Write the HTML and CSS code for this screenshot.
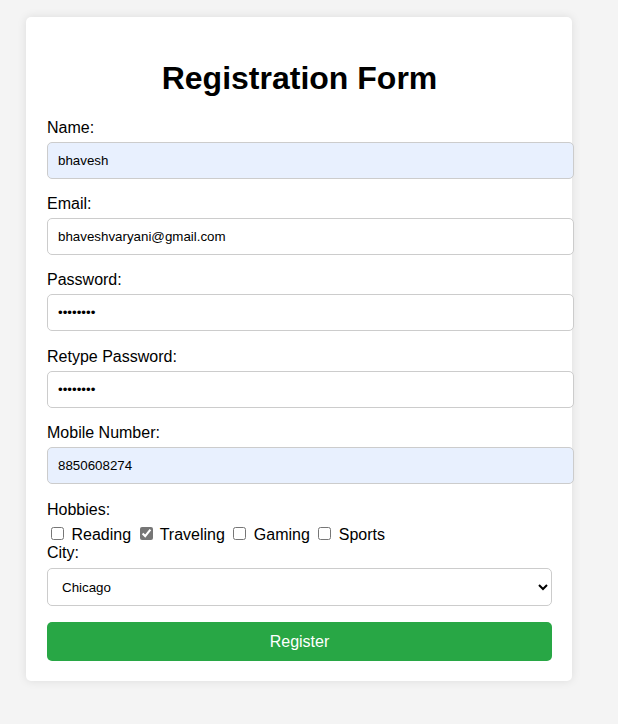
FILE: index.html
```html
<!DOCTYPE html>
<html>
<head>
<meta charset="utf-8">
<link rel="stylesheet" href="styles.css">
</head>
<body>
<div class="container">
  <h1 class="title">Registration Form</h1>
  <form class="form">
    <label class="field-label" for="name">Name:</label>
    <input class="field autofill" id="name" type="text" value="bhavesh">
    <label class="field-label" for="email">Email:</label>
    <input class="field" id="email" type="email" value="bhaveshvaryani@gmail.com">
    <label class="field-label" for="pw">Password:</label>
    <input class="field" id="pw" type="password" value="password">
    <label class="field-label retype" for="pw2">Retype Password:</label>
    <input class="field" id="pw2" type="password" value="password">
    <label class="field-label" for="mobile">Mobile Number:</label>
    <input class="field autofill" id="mobile" type="text" value="8850608274">
    <label class="field-label hobby-title">Hobbies:</label>
    <div class="hobbies">
      <input class="check" type="checkbox" id="h1"> <label for="h1">Reading</label>
      <input class="check" type="checkbox" id="h2" checked> <label for="h2">Traveling</label>
      <input class="check" type="checkbox" id="h3"> <label for="h3">Gaming</label>
      <input class="check" type="checkbox" id="h4"> <label for="h4">Sports</label>
    </div>
    <label class="field-label" for="city">City:</label>
    <select class="select" id="city">
      <option>Chicago</option>
      <option>New York</option>
    </select>
    <button class="submit" type="button">Register</button>
  </form>
</div>
</body>
</html>
```
FILE: styles.css
```css
html, body {
  margin: 0;
  padding: 0;
}
body {
  background: #f4f4f4;
  font-family: "Liberation Sans", Arial, sans-serif;
  font-size: 16px;
  color: #000;
  padding: 17px 0 43px 26px;
}
.container {
  width: 505px;
  background: #fff;
  padding: 20px 20px 20px 21px;
  border-radius: 5px;
  box-shadow: 0 0 10px rgba(0, 0, 0, 0.1);
}
.title {
  text-align: center;
  font-size: 32px;
  font-weight: bold;
  margin: 23px 0 22px;
}
.form {
  margin: 0;
}
.field-label {
  display: block;
  margin-bottom: 5px;
}
.retype {
  padding-top: 1px;
}
.field {
  display: block;
  width: 100%;
  padding: 10px;
  margin: 0 0 16px;
  border: 1px solid #ccc;
  border-radius: 5px;
  font-family: "Liberation Sans", Arial, sans-serif;
  font-size: 13.33px;
  color: #000;
  background: #fff;
  box-sizing: content-box;
}
.autofill {
  background: #e8f0fe;
}
.hobby-title {
  padding-top: 1px;
}
.hobbies {
  display: block;
}
.check {
  margin: 3px 3px 3px 4px;
  accent-color: #767676;
}
.select {
  display: block;
  width: 100%;
  height: 38px;
  padding: 0 6px 0 10px;
  margin: 6px 0 16px;
  border: 1px solid #ccc;
  border-radius: 5px;
  font-family: "Liberation Sans", Arial, sans-serif;
  font-size: 13.33px;
  background: #fff;
  color: #000;
}
.submit {
  display: block;
  width: 100%;
  height: 39px;
  border: none;
  border-radius: 5px;
  background: #28a745;
  color: #fff;
  font-family: "Liberation Sans", Arial, sans-serif;
  font-size: 16px;
}
```
